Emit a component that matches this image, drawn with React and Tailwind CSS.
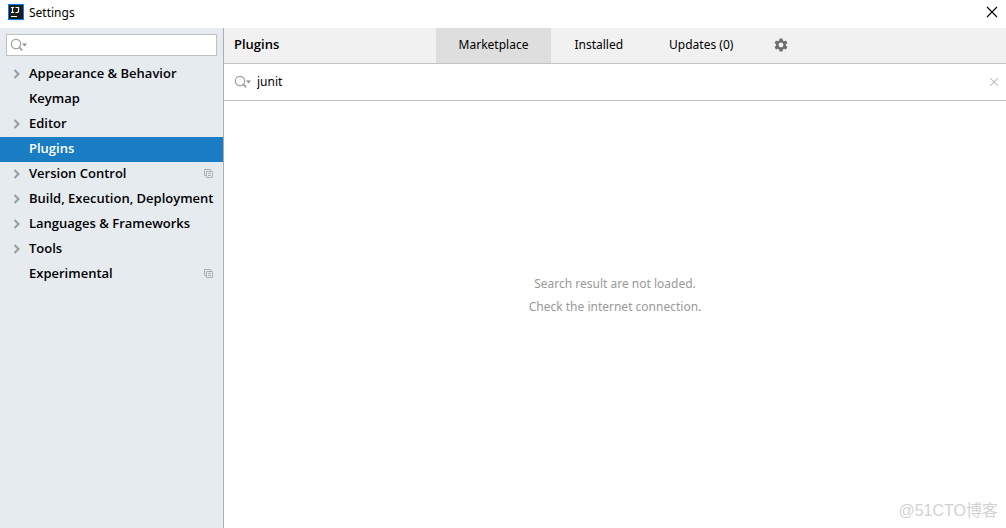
import React, { useState } from 'react';

const categories = [
  { name: 'Appearance & Behavior', expandable: true },
  { name: 'Keymap' },
  { name: 'Editor', expandable: true },
  { name: 'Plugins' },
  { name: 'Version Control', expandable: true, project: true },
  { name: 'Build, Execution, Deployment', expandable: true },
  { name: 'Languages & Frameworks', expandable: true },
  { name: 'Tools', expandable: true },
  { name: 'Experimental', project: true },
];

const tabs = ['Marketplace', 'Installed', 'Updates (0)'];

const IdeaLogo = () => (
  <svg width="16" height="16" viewBox="0 0 16 16" aria-hidden="true">
    <rect width="16" height="16" fill="#087cfa" />
    <rect x="1" y="1" width="14" height="14" fill="#1c1c1c" />
    <path d="M3 3.5h3M4.5 3.5v5M3 8.5h3M7.5 3.5h3v3.7q0 1.3-1.3 1.3h-1.7" fill="none" stroke="#fff" strokeWidth="1.2" />
    <path d="M3 12.5h6" stroke="#fff" strokeWidth="1" />
  </svg>
);

const SearchIcon = () => (
  <svg width="18" height="16" viewBox="0 0 18 16" className="shrink-0" aria-hidden="true">
    <circle cx="6" cy="7" r="4.7" fill="none" stroke="#9aa0a6" strokeWidth="1.2" />
    <path d="M9.4 10.4l2.8 2.9" stroke="#9aa0a6" strokeWidth="1.8" />
    <path d="M12 6.5h5l-2.5 3z" fill="#8a9299" />
  </svg>
);

const Chevron = () => (
  <svg width="8" height="10" viewBox="0 0 8 10" aria-hidden="true">
    <path d="M1.5 1l4 4-4 4" fill="none" stroke="#999c9e" strokeWidth="2" />
  </svg>
);

const ProjectIcon = () => (
  <svg width="10" height="10" viewBox="0 0 10 10" aria-hidden="true">
    <path d="M2.5 6.5h-2v-6h6v2" fill="none" stroke="#a9b0b6" />
    <path d="M2.5 2.5h6v6h-6zM4 4.5h3M4 6.5h3" fill="none" stroke="#a9b0b6" />
  </svg>
);

const Gear = () => (
  <svg width="14" height="14" viewBox="0 0 24 24" aria-hidden="true">
    <path
      fill="#6e6e6e"
      fillRule="evenodd"
      d="M9.5 1h5l.7 3.3 2.2 1.2 3.2-1.1 2.4 4.2-2.5 2.2v2.4l2.5 2.2-2.4 4.2-3.2-1.1-2.2 1.2-.7 3.3h-5l-.7-3.3-2.2-1.2-3.2 1.1L1 15.4l2.5-2.2v-2.4L1 8.6l2.4-4.2 3.2 1.1 2.2-1.2zM12 7.8a4.2 4.2 0 1 0 0 8.4 4.2 4.2 0 0 0 0-8.4z"
    />
  </svg>
);

const App = () => {
  const [category, setCategory] = useState('Plugins');
  const [tab, setTab] = useState('Marketplace');
  const [filter, setFilter] = useState('');
  const [query, setQuery] = useState('junit');

  return (
    <div className="relative flex min-h-screen flex-col bg-white font-['Noto_Sans','Noto_Sans_CJK_SC',sans-serif] text-xs leading-5 text-black">
      <header className="flex h-7 items-center px-2 pb-1">
        <IdeaLogo />
        <h1 className="ml-[5px] pt-px">Settings</h1>
        <button aria-label="Close" className="ml-auto">
          <svg width="12" height="12" viewBox="0 0 12 12">
            <path d="M1 1l10 10M11 1L1 11" stroke="#000" strokeWidth="1.1" />
          </svg>
        </button>
      </header>

      <div className="flex grow">
        <aside className="w-56 shrink-0 border-r border-[#a9aeb2] bg-[#e6ebf0] pt-[6px]">
          <label className="mx-[6px] flex h-[22px] items-center border border-[#bdc0c2] bg-white pl-[3px]">
            <SearchIcon />
            <input
              aria-label="Search settings"
              value={filter}
              onChange={(e) => setFilter(e.target.value)}
              className="w-full min-w-0 outline-none"
            />
          </label>
          <nav className="mt-[6px]">
            {categories.map((c) => (
              <button
                key={c.name}
                onClick={() => setCategory(c.name)}
                className={`flex h-[25px] w-full items-center pr-[9px] pb-[2px] pl-[13px] text-left font-['Open_Sans',sans-serif] text-[13px] font-semibold whitespace-nowrap ${category === c.name ? 'bg-[#1a7dc4] text-white' : ''}`}
              >
                <span className="w-4 shrink-0">{c.expandable && <Chevron />}</span>
                <span className="grow pb-px">{c.name}</span>
                {c.project && <ProjectIcon />}
              </button>
            ))}
          </nav>
        </aside>

        <main className="flex min-w-0 grow flex-col">
          <div className="grid h-9 grid-cols-[1fr_auto_1fr] border-b border-[#c4c4c4] bg-[#f1f1f1]">
            <h2 className="self-center pb-[3px] pl-[10px] font-['Open_Sans',sans-serif] text-[13px] font-semibold">Plugins</h2>
            <div className="flex">
              {tabs.map((t) => (
                <button
                  key={t}
                  onClick={() => setTab(t)}
                  className={`px-[23px] pb-px whitespace-nowrap ${tab === t ? 'bg-[#dedede]' : ''}`}
                >
                  {t}
                </button>
              ))}
              <button aria-label="Plugin settings" className="pr-[6px] pb-px pl-[18px]">
                <Gear />
              </button>
            </div>
          </div>

          <div className="flex h-[37px] items-center border-b border-[#c4c4c4] pr-2 pl-[10px]">
            <SearchIcon />
            <input
              aria-label="Search plugins"
              value={query}
              onChange={(e) => setQuery(e.target.value)}
              className="ml-[5px] min-w-0 grow outline-none"
            />
            <button aria-label="Clear search" onClick={() => setQuery('')}>
              <svg width="8" height="8" viewBox="0 0 8 8">
                <path d="M0 0l8 8M8 0L0 8" stroke="#b9c0c7" strokeWidth="1.1" />
              </svg>
            </button>
          </div>

          <div className="flex grow flex-col items-center justify-center pb-10 text-center leading-[23px] text-[#999]">
            <p>Search result are not loaded.</p>
            <p>Check the internet connection.</p>
          </div>
        </main>
      </div>

      <span className="absolute right-2 bottom-[5px] font-['Liberation_Sans','Noto_Sans_CJK_SC',sans-serif] text-base text-[#d2d2d2]">
        @51CTO博客
      </span>
    </div>
  );
};

export default App;
